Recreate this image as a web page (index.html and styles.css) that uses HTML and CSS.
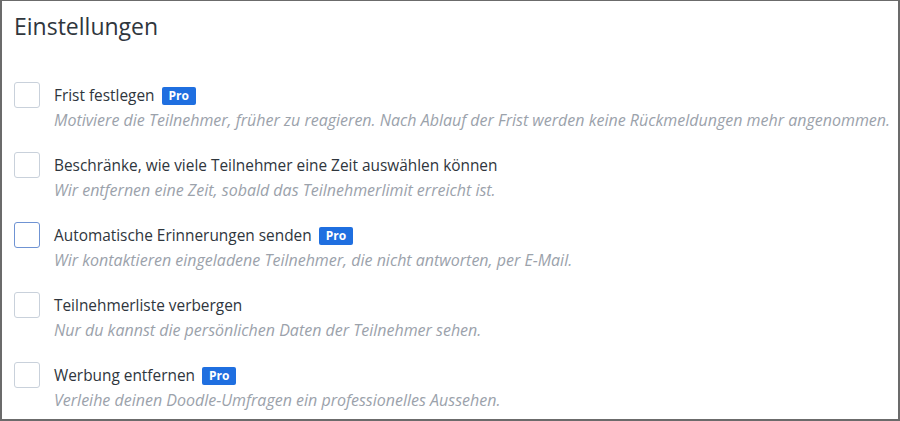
FILE: index.html
```html
<!DOCTYPE html>
<html lang="de">
<head>
<meta charset="utf-8">
<link rel="stylesheet" href="styles.css">
</head>
<body>
<div class="panel">
  <h1 class="title">Einstellungen</h1>
  <ul class="options">
    <li class="option">
      <span class="checkbox"></span>
      <div class="text">
        <div class="label">Frist festlegen <span class="pro">Pro</span></div>
        <div class="desc">Motiviere die Teilnehmer, früher zu reagieren. Nach Ablauf der Frist werden keine Rückmeldungen mehr angenommen.</div>
      </div>
    </li>
    <li class="option">
      <span class="checkbox"></span>
      <div class="text">
        <div class="label">Beschränke, wie viele Teilnehmer eine Zeit auswählen können</div>
        <div class="desc">Wir entfernen eine Zeit, sobald das Teilnehmerlimit erreicht ist.</div>
      </div>
    </li>
    <li class="option">
      <span class="checkbox checkbox-focus"></span>
      <div class="text">
        <div class="label">Automatische Erinnerungen senden <span class="pro">Pro</span></div>
        <div class="desc">Wir kontaktieren eingeladene Teilnehmer, die nicht antworten, per E-Mail.</div>
      </div>
    </li>
    <li class="option">
      <span class="checkbox"></span>
      <div class="text">
        <div class="label">Teilnehmerliste verbergen</div>
        <div class="desc">Nur du kannst die persönlichen Daten der Teilnehmer sehen.</div>
      </div>
    </li>
    <li class="option">
      <span class="checkbox"></span>
      <div class="text">
        <div class="label">Werbung entfernen <span class="pro">Pro</span></div>
        <div class="desc">Verleihe deinen Doodle-Umfragen ein professionelles Aussehen.</div>
      </div>
    </li>
  </ul>
</div>
</body>
</html>
```
FILE: styles.css
```css
html, body {
  margin: 0;
  padding: 0;
  background: #ffffff;
}
body {
  font-family: "Open Sans", "Noto Sans", sans-serif;
  color: #2f363d;
}
.panel {
  box-sizing: border-box;
  width: 900px;
  height: 421px;
  border: 2px solid #6b6b6b;
  border-top-width: 1px;
  padding: 9px 12px 0 12px;
  overflow: hidden;
}
.title {
  margin: 0;
  font-size: 23px;
  line-height: 32px;
  font-weight: 400;
  color: #2f363d;
}
.options {
  list-style: none;
  margin: 40px 0 0 0;
  padding: 0;
  display: flex;
  flex-direction: column;
  gap: 20px;
}
.option {
  display: flex;
  align-items: flex-start;
  height: 50px;
}
.checkbox {
  box-sizing: border-box;
  flex: none;
  width: 26px;
  height: 26px;
  border: 1px solid #c9d1db;
  border-radius: 3px;
  background: #fff;
}
.checkbox-focus {
  border-color: #6f93d3;
}
.text {
  margin-left: 14px;
  padding-top: 2px;
}
.label {
  font-size: 15.4px;
  line-height: 24px;
  color: #2f363d;
  display: flex;
  align-items: center;
  gap: 7px;
  white-space: nowrap;
}
.pro {
  display: inline-block;
  background: #1f6fe0;
  color: #fff;
  font-size: 12px;
  font-weight: 700;
  line-height: 18px;
  height: 18px;
  padding: 0 7px;
  border-radius: 2px;
}
.desc {
  font-size: 16px;
  line-height: 24px;
  font-style: italic;
  color: #9ba2ab;
  white-space: nowrap;
}
```
